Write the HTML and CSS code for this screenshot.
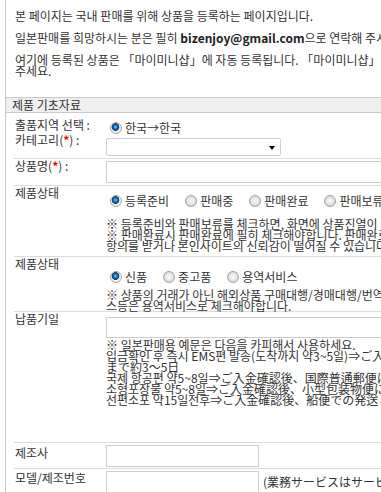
FILE: index.html
```html
<!doctype html>
<html>
<head>
    <meta charset="utf-8">
    <link rel="stylesheet" href="styles.css">
</head>
<body>
<div class="wrap">
    <div class="info">
        <p>본 페이지는 국내 판매를 위해 상품을 등록하는 페이지입니다.</p>
        <p>일본판매를 희망하시는 분은 필히 <b>bizenjoy@gmail.com</b>으로 연락해 주시기 바랍니다.</p>
        <p>여기에 등록된 상품은 「마이미니샵」에 자동 등록됩니다. 「마이미니샵」 판매를 원하지 않으시면 연락해<br>주세요.</p>
    </div>
    <div class="section-title">제품 기초자료</div>
    <form class="form">
        <div class="row row-region">
            <div class="label">출품지역 선택 :</div>
            <div class="value">
                <label class="opt"><input type="radio" name="region" checked>한국→한국</label>
            </div>
        </div>
        <div class="row row-category">
            <div class="label">카테고리(<span class="req">*</span>) :</div>
            <div class="value">
                <span class="select-box"><select class="select"><option></option></select></span>
            </div>
        </div>
        <div class="row row-name">
            <div class="label">상품명(<span class="req">*</span>) :</div>
            <div class="value"><input class="text wide" type="text"></div>
        </div>
        <div class="row row-status">
            <div class="label">제품상태</div>
            <div class="value">
                <div class="opts">
                    <label class="opt"><input type="radio" name="status" checked>등록준비</label>
                    <label class="opt"><input type="radio" name="status">판매중</label>
                    <label class="opt"><input type="radio" name="status">판매완료</label>
                    <label class="opt"><input type="radio" name="status">판매보류</label>
                </div>
                <div class="note">※ 등록준비와 판매보류를 체크하면, 화면에 상품진열이 되지 않습니다.<br>※ 판매완료시 판매완료에 필히 체크해야합니다. 판매완료된 상품을 그대로 두시면 고객으로부터<br>항의를 받거나 본인사이트의 신뢰감이 떨어질 수 있습니다.</div>
            </div>
        </div>
        <div class="row row-kind">
            <div class="label">제품상태</div>
            <div class="value">
                <div class="opts">
                    <label class="opt"><input type="radio" name="kind" checked>신품</label>
                    <label class="opt"><input type="radio" name="kind">중고품</label>
                    <label class="opt"><input type="radio" name="kind">용역서비스</label>
                </div>
                <div class="note">※ 상품의 거래가 아닌 해외상품 구매대행/경매대행/번역/통역 등의 서비<br>스등은 용역서비스로 체크해야합니다.</div>
            </div>
        </div>
        <div class="row row-delivery">
            <div class="label">납품기일</div>
            <div class="value">
                <input class="text wide" type="text">
                <div class="note">※ 일본판매용 예문은 다음을 카피해서 사용하세요.<br>입금확인 후 즉시 EMS편 발송(도착까지 약3~5일)⇒ご入金確認後、即日EMS便にて発送いたします。到着<br>まで約3～5日<br>국제 항공편 약5~8일⇒ご入金確認後、国際普通郵便にて発送いたします。<br>소형포장물 약5~8일⇒ご入金確認後、小型包装物便にて発送いたします。<br>선편소포 약15일전후⇒ご入金確認後、船便での発送となります。</div>
            </div>
        </div>
        <div class="row row-maker">
            <div class="label">제조사</div>
            <div class="value"><input class="text short" type="text"></div>
        </div>
        <div class="row row-model">
            <div class="label">모델/제조번호</div>
            <div class="value inline">
                <input class="text short" type="text">
                <span class="hint">(業務サービスはサービス内容を記入してください)</span>
            </div>
        </div>
    </form>
</div>
</body>
</html>
```

FILE: styles.css
```css
html, body {
    margin: 0;
    overflow: hidden;
    background: #fff;
}
body {
    padding-left: 5px;
    font-family: "Noto Sans CJK KR", "Noto Sans CJK JP", sans-serif;
    font-size: 12px;
    color: #333;
}
.wrap {
    width: 760px;
    min-height: 492px;
    border-left: 1px solid #c8c8c8;
}
.info {
    padding: 10px 9px 10px;
}
.info p {
    margin: 0 0 11px;
    line-height: 11px;
    white-space: nowrap;
}
.info b {
    color: #222;
}
.section-title {
    height: 14px;
    line-height: 14px;
    padding-left: 6px;
    background: #efefef;
    border-top: 1px solid #cacaca;
    border-bottom: 1px solid #cacaca;
}
.form {
    margin: 0 0 0 8px;
}
.row {
    display: grid;
    grid-template-columns: 92px 1fr;
    border-top: 1px solid #dcdcdc;
}
.label {
    line-height: 14px;
    padding-left: 1px;
    white-space: nowrap;
}
.value {
    line-height: 16px;
    white-space: nowrap;
}
.req {
    color: #e00;
    font-weight: bold;
}
.opts {
    display: flex;
    gap: 12px;
}
.opt {
    display: inline-flex;
    align-items: center;
}
.opt input {
    appearance: none;
    -webkit-appearance: none;
    width: 12px;
    height: 12px;
    margin: 0 3px 0 4px;
    border: 1px solid #a5a5a5;
    border-radius: 50%;
    background: radial-gradient(circle at 50% 50%, #ffffff 0, #f0f0f0 2px, #d5d5d5 5px);
}
.opt input:checked {
    background: radial-gradient(circle at 45% 40%, #8fd8ff 0, #1c7fd0 1.5px, #0b4f9a 3px, #333 3.6px, #fff 4.2px, #e6e6e6 6px);
}
.note {
    line-height: 11px;
}
.select-box {
    position: relative;
    display: inline-block;
}
.select-box::after {
    content: "";
    position: absolute;
    right: 6px;
    top: 8px;
    border-top: 4px solid #000;
    border-left: 3px solid transparent;
    border-right: 3px solid transparent;
}
.select {
    appearance: none;
    -webkit-appearance: none;
    display: block;
    width: 175px;
    height: 18px;
    margin: 0;
    padding: 0;
    border: 1px solid #cfcfcf;
    border-radius: 2px;
    background: #fff;
}
.text {
    display: block;
    box-sizing: border-box;
    height: 22px;
    margin: 0;
    padding: 0 3px;
    border: 1px solid #cdcdcd;
    background: #fff;
}
.wide {
    width: 450px;
}
.short {
    width: 153px;
}
.inline {
    display: flex;
    align-items: center;
    gap: 4px;
}
.hint {
    line-height: 12px;
}

/* row spacing */
.row-region {
    border-top: 0;
}
.row-region .label {
    padding-top: 5px;
}
.row-region .value {
    padding-top: 7px;
    height: 12px;
}
.row-category {
    border-top: 0;
}
.row-category .label {
    padding-top: 1px;
}
.row-category .value {
    padding: 6px 0 2px;
}
.row-name .value {
    padding: 2px 0 2px;
}
.row-status .value {
    padding: 7px 0 5px;
}
.row-status .note {
    margin-top: 9px;
}
.row-kind .value {
    padding: 12px 0 0;
}
.row-kind .note {
    margin-top: 4px;
}
.row-delivery .value {
    padding: 5px 0 37px;
}
.row-delivery .text {
    height: 21px;
}
.row-delivery .note {
    margin-top: 1px;
}
.row-maker .label {
    padding-top: 3px;
}
.row-model .label {
    padding-top: 2px;
}
.row-maker .value {
    padding: 2px 0 1px;
}
.row-model .value {
    padding-top: 2px;
}
```
